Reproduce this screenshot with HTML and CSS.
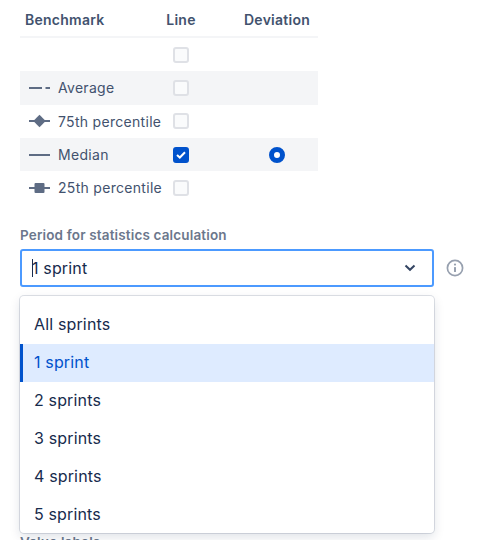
FILE: index.html
```html
<!DOCTYPE html>
<html lang="en">
<head>
  <meta charset="UTF-8">
  <title>Benchmark settings</title>
  <link rel="stylesheet" href="styles.css">
</head>
<body>

  <div class="bench-table">
    <div class="bench-row bench-head">
      <div class="col-name">Benchmark</div>
      <div class="col-line">Line</div>
      <div class="col-dev">Deviation</div>
    </div>

    <div class="bench-row">
      <div class="col-name"></div>
      <div class="col-line"><span class="check"></span></div>
      <div class="col-dev"></div>
    </div>

    <div class="bench-row shaded">
      <div class="col-name">
        <svg class="line-icon" width="22" height="10" viewBox="0 0 22 10"><path d="M0 5H13M16.500 5H21" stroke="#5e6c84" stroke-width="2"/></svg>
        Average
      </div>
      <div class="col-line"><span class="check"></span></div>
      <div class="col-dev"></div>
    </div>

    <div class="bench-row">
      <div class="col-name">
        <svg class="line-icon" width="22" height="14" viewBox="0 0 22 14"><path d="M0 7H21" stroke="#5e6c84" stroke-width="2"/><path d="M10.500 0.800L16.700 7L10.500 13.200L4.300 7Z" fill="#5e6c84"/></svg>
        75th percentile
      </div>
      <div class="col-line"><span class="check"></span></div>
      <div class="col-dev"></div>
    </div>

    <div class="bench-row shaded">
      <div class="col-name">
        <svg class="line-icon" width="22" height="10" viewBox="0 0 22 10"><path d="M0 5H21" stroke="#5e6c84" stroke-width="2"/></svg>
        Median
      </div>
      <div class="col-line">
        <span class="check checked">
          <svg width="10" height="8" viewBox="0 0 10 8"><path d="M1 4L3.800 6.500L9 1.200" fill="none" stroke="#fff" stroke-width="2"/></svg>
        </span>
      </div>
      <div class="col-dev"><span class="radio"></span></div>
    </div>

    <div class="bench-row">
      <div class="col-name">
        <svg class="line-icon" width="22" height="12" viewBox="0 0 22 12"><path d="M0 6H21" stroke="#5e6c84" stroke-width="2"/><rect x="5.500" y="1" width="10" height="10" rx="1" fill="#5e6c84"/></svg>
        25th percentile
      </div>
      <div class="col-line"><span class="check"></span></div>
      <div class="col-dev"></div>
    </div>
  </div>

  <div class="field">
    <label class="field-label">Period for statistics calculation</label>
    <div class="select-row">
      <div class="select-wrap">
        <div class="select-box">
          <span class="caret"></span>
          <span class="select-value">1 sprint</span>
          <svg class="chevron" width="12" height="8" viewBox="0 0 12 8"><path d="M1.500 1.500L6 5.800L10.500 1.500" fill="none" stroke="#344563" stroke-width="2"/></svg>
        </div>
        <ul class="menu">
          <li>All sprints</li>
          <li class="selected">1 sprint</li>
          <li>2 sprints</li>
          <li>3 sprints</li>
          <li>4 sprints</li>
          <li>5 sprints</li>
        </ul>
      </div>
      <svg class="info" width="20" height="20" viewBox="0 0 20 20">
        <circle cx="10" cy="10" r="7.600" fill="none" stroke="#97a0af" stroke-width="1.700"/>
        <circle cx="10" cy="6.600" r="1.100" fill="#97a0af"/>
        <rect x="9" y="9" width="2" height="5" rx="0.500" fill="#97a0af"/>
      </svg>
    </div>
  </div>

  <div class="field value-labels">
    <label class="field-label">Value labels</label>
  </div>

</body>
</html>
```

FILE: styles.css
```css
html, body {
  height: 540px;
  overflow: hidden;
}
body {
  margin: 0;
  padding: 0 20px;
  font-family: Inter, "Noto Sans", sans-serif;
  color: #172b4d;
  background: #fff;
}
.bench-table {
  width: 298px;
}
.bench-row {
  display: flex;
  align-items: center;
  height: 33.330px;
}
.bench-head {
  height: 34px;
  padding-top: 2px;
  border-bottom: 2px solid #f4f5f7;
}
.shaded {
  background: #f4f5f7;
}
.col-name {
  width: 131px;
  padding-left: 5px;
  display: flex;
  align-items: center;
  gap: 7.500px;
  font-size: 14px;
  color: #42526e;
  white-space: nowrap;
  letter-spacing: 0.3px;
}
.col-line {
  width: 50px;
  display: flex;
  justify-content: center;
}
.col-dev {
  width: 82px;
  margin-left: 30px;
  display: flex;
  justify-content: center;
}
.bench-head .col-name,
.bench-head .col-line,
.bench-head .col-dev {
  font-size: 14px;
  font-weight: 600;
  letter-spacing: 0.25px;
  color: #42526e;
}
.line-icon {
  flex: none;
  margin-left: 3.500px;
}
.check {
  box-sizing: border-box;
  width: 16px;
  height: 16px;
  border: 2px solid #dfe1e6;
  border-radius: 3px;
  background: #fafbfc;
  display: flex;
  align-items: center;
  justify-content: center;
}
.checked {
  background: #0052cc;
  border-color: #0052cc;
}
.radio {
  box-sizing: border-box;
  width: 16px;
  height: 16px;
  border: 5px solid #0052cc;
  border-radius: 50%;
  background: #fff;
}
.field {
  margin-top: 21.350px;
}
.field-label {
  display: block;
  font-size: 13.500px;
  font-weight: 600;
  line-height: 18px;
  color: #6b778c;
  margin-bottom: 5px;
  letter-spacing: 0.15px;
}
.select-row {
  display: flex;
  align-items: center;
  gap: 11px;
}
.select-wrap {
  position: relative;
  width: 414px;
}
.select-box {
  box-sizing: border-box;
  height: 38px;
  border: 2px solid #4c9aff;
  border-radius: 3px;
  display: flex;
  align-items: center;
  padding: 0 16px 0 10px;
  font-size: 16px;
  letter-spacing: 0.15px;
}
.caret {
  width: 1px;
  height: 18px;
  background: #172b4d;
  margin-right: -1px;
}
.select-value {
  flex: 1;
}
.chevron {
  flex: none;
}
.info {
  flex: none;
}
.menu {
  position: absolute;
  top: 47px;
  left: 0;
  width: 414px;
  height: 237px;
  box-sizing: border-box;
  margin: 0;
  padding: 10px 0 0;
  list-style: none;
  background: #fff;
  border-radius: 4px;
  box-shadow: 0 0 0 1px rgba(9, 30, 66, 0.13), 0 4px 11px rgba(9, 30, 66, 0.13);
  overflow: hidden;
  z-index: 2;
}
.menu li {
  box-sizing: border-box;
  height: 38px;
  line-height: 37px;
  padding-left: 14px;
  font-size: 16px;
  letter-spacing: 0.15px;
}
.menu .selected {
  background: #deebff;
  color: #0052cc;
  border-left: 3px solid #0052cc;
  padding-left: 11px;
}
.value-labels {
  margin-top: 246px;
}
```
